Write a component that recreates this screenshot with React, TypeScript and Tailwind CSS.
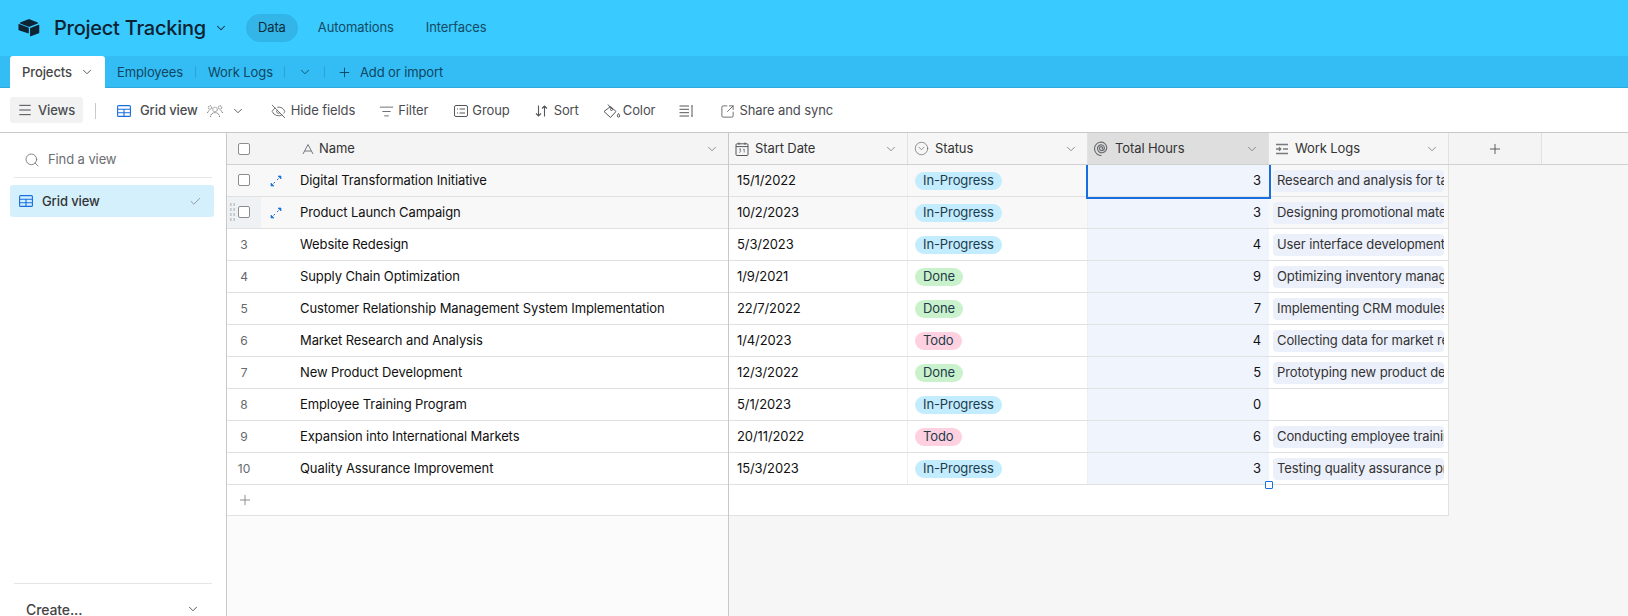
import {
  Check, ChevronDown, CircleChevronDown, EyeOff, ListFilter, Menu, Plus, Search, SquareArrowOutUpRight,
} from 'lucide-react'

type Status = 'In-Progress' | 'Done' | 'Todo'

const rows: { name: string; date: string; status: Status; hours: number; log: string }[] = [
  { name: 'Digital Transformation Initiative', date: '15/1/2022', status: 'In-Progress', hours: 3, log: 'Research and analysis for target audience' },
  { name: 'Product Launch Campaign', date: '10/2/2023', status: 'In-Progress', hours: 3, log: 'Designing promotional materials' },
  { name: 'Website Redesign', date: '5/3/2023', status: 'In-Progress', hours: 4, log: 'User interface development' },
  { name: 'Supply Chain Optimization', date: '1/9/2021', status: 'Done', hours: 9, log: 'Optimizing inventory management' },
  { name: 'Customer Relationship Management System Implementation', date: '22/7/2022', status: 'Done', hours: 7, log: 'Implementing CRM modules' },
  { name: 'Market Research and Analysis', date: '1/4/2023', status: 'Todo', hours: 4, log: 'Collecting data for market research' },
  { name: 'New Product Development', date: '12/3/2022', status: 'Done', hours: 5, log: 'Prototyping new product designs' },
  { name: 'Employee Training Program', date: '5/1/2023', status: 'In-Progress', hours: 0, log: '' },
  { name: 'Expansion into International Markets', date: '20/11/2022', status: 'Todo', hours: 6, log: 'Conducting employee training' },
  { name: 'Quality Assurance Improvement', date: '15/3/2023', status: 'In-Progress', hours: 3, log: 'Testing quality assurance process' },
]

const statusColor: Record<Status, string> = {
  'In-Progress': 'bg-[#c4ecff]',
  Done: 'bg-[#c9f2cc]',
  Todo: 'bg-[#ffd1e0]',
}

function GridIcon({ className }: { className?: string }) {
  return (
    <svg viewBox="0 0 14 12" fill="none" stroke="#166ee1" strokeWidth="1.1" className={className}>
      <rect x="0.6" y="0.6" width="12.8" height="10.8" rx="1" />
      <path d="M0.6 4.2H13.4M0.6 7.8H13.4M7 4.2V11.4" />
    </svg>
  )
}

function Logo() {
  return (
    <svg viewBox="0 0 24 20" className="h-[18px] w-[22px]" fill="#0f2433">
      <path d="M10.6 0.6 2.2 4c-.5.2-.5.9 0 1.1l8.5 3.3c.8.3 1.7.3 2.5 0l8.5-3.3c.5-.2.5-.9 0-1.1L13.3.6c-.9-.3-1.800-.3-2.700 0Z" />
      <path d="M13.2 10.6v8.2c0 .4.4.7.8.5l9-3.5c.3-.1.4-.3.4-.6V7c0-.4-.4-.7-.8-.5l-9 3.500c-.3.100-.4.300-.4.600Z" />
      <path d="M11.800 9.800 1 5.500C.6 5.300.3 5.600.3 6v6c0 .3.200.5.400.6l10 3.300c.5.200 1.100-.2 1.100-.7Z" />
    </svg>
  )
}

function NameIcon() {
  return (
    <svg viewBox="0 0 12 12" className="h-3 w-3" fill="none" stroke="#77797d" strokeWidth="1">
      <path d="M1 11 6 1.500 11 11M2.700 8H9.300" />
    </svg>
  )
}

function CalendarIcon() {
  return (
    <svg viewBox="0 0 14 14" className="h-[14px] w-[14px] shrink-0" fill="none" stroke="#55575b" strokeWidth="1">
      <rect x="1" y="1.800" width="12" height="11.700" rx="1" />
      <path d="M1 4.600H13M4 0.500V2.800M10 0.500V2.800" />
      <path d="M4.200 7H6L4.800 8.300C6 8.300 6.200 10.500 4.200 10.300M8.200 7.400 9.200 7V10.500" strokeWidth="0.7" />
    </svg>
  )
}

function SpiralIcon() {
  return (
    <svg viewBox="0 0 14 14" className="h-[15px] w-[15px] shrink-0" fill="none" stroke="#66686c" strokeWidth="1.050">
      <path d="M7 7.500c.7 0 1-.5 1-1 0-.8-.7-1.300-1.400-1.200C5.500 5.400 5 6.300 5.100 7.200c.2 1.200 1.300 1.900 2.400 1.700 1.400-.2 2.300-1.500 2.100-2.900C9.300 4.400 7.800 3.300 6.200 3.600 4.300 3.900 3 5.700 3.300 7.600c.4 2.200 2.400 3.700 4.600 3.300 2.600-.4 4.300-2.800 3.900-5.400C11.300 2.500 8.500.6 5.500 1.200 2.200 1.800 0 5 .6 8.300c.6 3.200 3.300 5.300 6.400 5.200" />
    </svg>
  )
}

function LinkedIcon() {
  return (
    <svg viewBox="0 0 14 12" className="h-3 w-[14px] shrink-0" fill="none" stroke="#77797d" strokeWidth="1.300">
      <path d="M1 1.500H13M8 6H13M1 10.500H13M1 6H5.500M4 4.300 5.800 6 4 7.700" />
    </svg>
  )
}

function ExpandIcon() {
  return (
    <svg viewBox="0 0 12 12" className="h-3 w-3" fill="#166ee1" stroke="#166ee1" strokeWidth="0.6">
      <path d="M8 1H11V4Z" />
      <path d="M1 8V11H4Z" />
      <path d="M3.500 8.500 5 7M7 5 8.500 3.500" fill="none" strokeWidth="1" />
    </svg>
  )
}

function PeopleIcon() {
  return (
    <svg viewBox="0 0 16 14" className="h-[14px] w-4" fill="none" stroke="#55575b" strokeWidth="0.8" strokeDasharray="1.200 0.600">
      <circle cx="8" cy="5.500" r="2.300" />
      <path d="M3.500 13c.3-3 2-4.300 4.500-4.300S12.200 10 12.500 13" />
      <circle cx="3" cy="3.500" r="1.700" />
      <circle cx="13" cy="3.500" r="1.700" />
      <path d="M.5 9c.2-1.600 1-2.500 2.500-2.500M15.500 9c-.2-1.600-1-2.500-2.500-2.500" />
    </svg>
  )
}

function GroupIcon() {
  return (
    <svg viewBox="0 0 14 12" className="h-3 w-[14px]" fill="none" stroke="#55575b" strokeWidth="1">
      <rect x="0.500" y="0.500" width="13" height="11" rx="1.500" />
      <path d="M3 4H4M5.500 4H11M3 8H4M5.500 8H11" />
    </svg>
  )
}

function SortIcon() {
  return (
    <svg viewBox="0 0 13 12" className="h-3 w-[13px]" fill="none" stroke="#55575b" strokeWidth="1.100">
      <path d="M3.500 0.500V11M1 8.500 3.500 11 6 8.500M9.500 11.500V1M7 3.500 9.500 1 12 3.500" />
    </svg>
  )
}

function BucketIcon() {
  return (
    <svg viewBox="0 0 18 16" className="h-[16px] w-[18px]" fill="none" stroke="#55575b" strokeWidth="1">
      <path d="M7.500 3.500 13 8.500 7.500 14.500 1 8.500Z" />
      <path d="M5 1.500 8.500 6" />
      <circle cx="8.500" cy="6.500" r="1" />
      <path d="M15.500 10.500c.8 1.200 1.200 1.800 1.200 2.400a1.200 1.200 0 0 1-2.400 0c0-.6.400-1.200 1.200-2.400Z" />
    </svg>
  )
}

function RowHeightIcon() {
  return (
    <svg viewBox="0 0 15 12" className="h-3 w-[15px]" fill="none" stroke="#55575b" strokeWidth="1">
      <path d="M.5 1H10M.5 4.300H10M.5 7.700H10M.5 11H10M13 1.500V10.500M12 1H14M12 11H14" />
    </svg>
  )
}

function HeaderCell({ icon, label, width, active }: { icon: React.ReactNode; label: string; width: string; active?: boolean }) {
  return (
    <div className={`flex h-full items-center gap-[6px] border-r border-[#e1e1e1] pl-[6px] pr-[9px] text-[#333] ${width} ${active ? 'bg-[#dedede]' : ''}`}>
      {icon}
      <span>{label}</span>
      <ChevronDown className="ml-auto h-[14px] w-[14px] text-[#66686c]" strokeWidth={1.25} />
    </div>
  )
}

export default function App() {
  return (
    <div className="flex h-[616px] w-[1628px] flex-col overflow-hidden bg-white font-['Inter',sans-serif] text-[13px] tracking-[-0.1px] text-[#1d1f25]">
      {/* Base header */}
      <header className="flex h-[56px] shrink-0 items-center bg-[#39caff] pl-[18px] text-[#0f2c3d]">
        <Logo />
        <h1 className="ml-[14px] text-[20px] font-medium tracking-[-0.25px] text-[#0d2230]">Project Tracking</h1>
        <ChevronDown className="ml-[8px] h-[14px] w-[14px]" strokeWidth={1.75} />
        <div className="ml-[18px] flex h-[28px] w-[52px] items-center justify-center rounded-full border border-[#2fb4e8] bg-[#33b5e8]">Data</div>
        <span className="ml-[20px] text-[#164a63]">Automations</span>
        <span className="ml-[32px] text-[#164a63]">Interfaces</span>
        <ChevronDown className="ml-auto mr-[-13px] h-[14px] w-[14px]" strokeWidth={1.75} />
      </header>

      {/* Table tabs */}
      <nav className="flex h-[32px] shrink-0 items-center bg-[#34bdf4] pl-[10px] text-[#0f4662] shadow-[inset_0_-1px_0_#2fa9da]">
        <div className="flex h-full w-[95px] items-center gap-[8px] rounded-t-[3px] bg-white pl-[12px] font-medium text-[#444]">
          <span className="pt-[2px]">Projects</span>
          <ChevronDown className="h-[14px] w-[14px]" strokeWidth={1.5} />
        </div>
        <span className="ml-[12px] pt-[2px]">Employees</span>
        <div className="ml-[12px] h-[12px] w-px bg-[#2ea5d6]" />
        <span className="ml-[12px] pt-[2px]">Work Logs</span>
        <div className="ml-[11px] h-[12px] w-px bg-[#2ea5d6]" />
        <ChevronDown className="ml-[13px] h-[14px] w-[14px]" strokeWidth={1.5} />
        <div className="ml-[12px] h-[12px] w-px bg-[#2ea5d6]" />
        <Plus className="ml-[12px] h-[15px] w-[15px]" strokeWidth={1.5} />
        <span className="ml-[8px] pt-[2px]">Add or import</span>
      </nav>

      {/* View toolbar */}
      <div className="flex h-[45px] shrink-0 items-center border-b border-[#c9c9c9] pl-[10px] pt-[2px] text-[#4a4c50]">
        <div className="-mt-[2px] flex h-[26px] w-[73px] items-center gap-[5px] rounded-[3px] bg-[#f2f2f2] pl-[7px] font-medium">
          <Menu className="h-[16px] w-[16px]" strokeWidth={1.5} />
          <span className="pt-px">Views</span>
        </div>
        <div className="ml-[12px] h-[16px] w-px bg-[#c9c9c9]" />
        <GridIcon className="ml-[21px] h-3 w-[14px]" />
        <span className="ml-[9px] font-medium">Grid view</span>
        <span className="ml-[9px]"><PeopleIcon /></span>
        <ChevronDown className="ml-[8px] h-[14px] w-[14px]" strokeWidth={1.5} />
        <EyeOff className="ml-[26px] h-[15px] w-[15px]" strokeWidth={1.25} />
        <span className="ml-[5px]">Hide fields</span>
        <ListFilter className="ml-[24px] h-[15px] w-[15px]" strokeWidth={1.25} />
        <span className="ml-[4px]">Filter</span>
        <span className="ml-[26px]"><GroupIcon /></span>
        <span className="ml-[4px]">Group</span>
        <span className="ml-[25px]"><SortIcon /></span>
        <span className="ml-[6px]">Sort</span>
        <span className="ml-[24px]"><BucketIcon /></span>
        <span className="ml-[2px]">Color</span>
        <span className="ml-[24px]"><RowHeightIcon /></span>
        <SquareArrowOutUpRight className="ml-[26px] h-[15px] w-[15px]" strokeWidth={1.25} />
        <span className="ml-[4px]">Share and sync</span>
      </div>

      <div className="flex min-h-0 flex-1">
        {/* Views sidebar */}
        <aside className="flex w-[227px] shrink-0 flex-col border-r border-[#c9c9c9] bg-white">
          <div className="mx-[14px] mt-[9px] flex h-[36px] items-center border-b border-[#e6e6e6] pl-[10px] text-[#6b6d71]">
            <Search className="h-[16px] w-[16px]" strokeWidth={1.25} />
            <span className="ml-[8px]">Find a view</span>
          </div>
          <div className="mx-[10px] mt-[7px] flex h-[32px] w-[204px] items-center rounded-[3px] bg-[#d4f0fd] pl-[9px] pr-[12px] text-[#333]">
            <GridIcon className="h-3 w-[14px]" />
            <span className="ml-[9px] pt-[2px] font-medium">Grid view</span>
            <Check className="ml-auto h-[13px] w-[13px] text-[#77797d]" strokeWidth={1.25} />
          </div>
          <div className="mx-[14px] mt-auto flex h-[33px] items-start border-t border-[#e6e6e6] pl-[12px] pr-[12px] pt-[18px]">
            <span className="text-[14px] font-medium leading-[16px] text-[#444]">Create...</span>
            <ChevronDown className="ml-auto h-[14px] w-[14px] text-[#444]" strokeWidth={1.5} />
          </div>
        </aside>

        {/* Frozen pane */}
        <div className="w-[502px] shrink-0 border-r border-[#c9c9c9] bg-[#fbfbfb]">
          <div className="flex h-[32px] items-center border-b border-[#d0d0d0] bg-[#f4f4f4] pr-[9px] text-[#333]">
            <div className="flex w-[75px] justify-start pl-[11px]">
              <span className="h-3 w-3 rounded-[2px] border border-[#8b8d91] bg-white" />
            </div>
            <NameIcon />
            <span className="ml-[5px]">Name</span>
            <ChevronDown className="ml-auto h-[14px] w-[14px] text-[#66686c]" strokeWidth={1.25} />
          </div>
          {rows.map((row, i) => (
            <div key={row.name} className={`relative flex h-[32px] items-center border-b border-[#e1e1e1] text-[#111] ${i < 2 ? 'bg-[#f8f8f8]' : 'bg-white'}`}>
              {i === 1 && (
                <div className="absolute inset-y-0 left-0 flex w-[34px] bg-[#eff2f5]">
                  <span className="ml-[2px] mt-[5px] h-[20px] w-[7px] bg-[radial-gradient(#c4c6ca_1px,transparent_1.2px)] bg-[length:3.500px_5px]" />
                </div>
              )}
              <div className="relative flex w-[73px] items-center">
                {i < 2 ? (
                  <>
                    <span className="-mt-px ml-[11px] h-3 w-3 rounded-[2px] border border-[#8b8d91] bg-white" />
                    <span className="ml-[20px]"><ExpandIcon /></span>
                  </>
                ) : (
                  <span className="w-[34px] text-center text-[12px] text-[#66686c]">{i + 1}</span>
                )}
              </div>
              <span>{row.name}</span>
            </div>
          ))}
          <div className="flex h-[31px] items-center border-b border-[#e1e1e1] bg-white pl-[10px]">
            <Plus className="h-[16px] w-[16px] text-[#77797d]" strokeWidth={1.25} />
          </div>
        </div>

        {/* Scrolling pane */}
        <div className="min-w-0 flex-1 bg-[#f6f6f6]">
          <div className="flex h-[32px] items-center border-b border-[#d0d0d0]">
            <HeaderCell icon={<CalendarIcon />} label="Start Date" width="w-[179px]" />
            <HeaderCell icon={<CircleChevronDown className="h-[15px] w-[15px] shrink-0 text-[#55575b]" strokeWidth={1} />} label="Status" width="w-[180px]" />
            <HeaderCell icon={<SpiralIcon />} label="Total Hours" width="w-[181px]" active />
            <HeaderCell icon={<LinkedIcon />} label="Work Logs" width="w-[180px]" />
            <div className="flex h-full w-[93px] items-center justify-center border-r border-[#e1e1e1] bg-[#f4f4f4]">
              <Plus className="h-[16px] w-[16px] text-[#444]" strokeWidth={1.25} />
            </div>
          </div>
          {rows.map((row, i) => (
            <div key={row.name} className={`flex h-[32px] w-[720px] items-stretch border-b border-r border-[#e1e1e1] text-[#111] ${i < 2 ? 'bg-[#f8f8f8]' : 'bg-white'}`}>
              <div className="flex w-[179px] items-center border-r border-[#efefef] pl-[8px]">{row.date}</div>
              <div className="flex w-[180px] items-center border-r border-[#efefef] pl-[7px]">
                <span className={`flex h-[18px] items-center rounded-full px-[8px] text-[#1d3b4a] ${statusColor[row.status]}`}>{row.status}</span>
              </div>
              <div className="relative flex w-[181px] items-center justify-end bg-[#f0f5fd] pr-[8px]">
                {row.hours}
                {i === 0 && <span className="absolute -bottom-[3px] -left-[2px] -right-[2px] top-0 z-10 border-2 border-t-0 border-[#166ee1]" />}
                {i === rows.length - 1 && <span className="absolute -bottom-[5px] -right-[4px] z-10 h-[8px] w-[8px] rounded-[1px] border border-[#166ee1] bg-white" />}
              </div>
              <div className="flex min-w-0 flex-1 items-center pl-[4px] pr-[4px]">
                {row.log && (
                  <span className="h-[22px] w-full overflow-hidden whitespace-nowrap rounded-[4px] bg-[#ecf0fa] pl-[4px] leading-[20px] text-[#333]">{row.log}</span>
                )}
              </div>
            </div>
          ))}
          <div className="h-[31px] w-[720px] border-b border-r border-[#e1e1e1] bg-white" />
        </div>
      </div>
    </div>
  )
}
